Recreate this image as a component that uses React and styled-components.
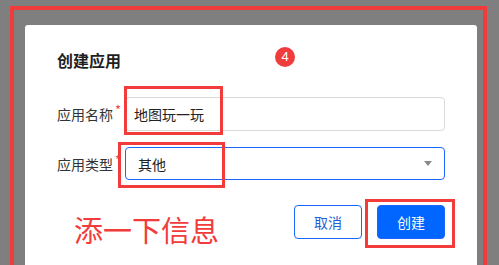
import styled, { createGlobalStyle } from "styled-components";

const GlobalStyle = createGlobalStyle`
	html, body {
		margin: 0;
		padding: 0;
		background: #7f7f7f;
		overflow: hidden;
	}
	body {
		font-family: "Noto Sans CJK SC", "Noto Sans", sans-serif;
	}
`;

const Frame = styled.div`
	box-sizing: border-box;
	width: 477px;
	height: 259px;
	margin: 6px 0 0 10px;
	border: 4px solid #f23b3b;
	border-bottom: none;
	padding: 15px 6px 0 11px;
	display: flex;
`;

const Dialog = styled.div`
	position: relative;
	flex: 1;
	background: #ffffff;
	border-radius: 3px 3px 0 0;
	padding: 23px 32px 0 32px;
	display: flex;
	flex-direction: column;
`;

const Title = styled.h3`
	margin: 0;
	font-size: 16px;
	line-height: 24px;
	font-weight: 700;
	color: #1f1f1f;
`;

const Form = styled.div`
	margin-top: 25px;
	display: flex;
	flex-direction: column;
	gap: 16px;
`;

const Row = styled.div`
	display: grid;
	grid-template-columns: 68px 1fr;
	align-items: center;
`;

const Label = styled.label`
	font-size: 14px;
	color: #333;
	white-space: nowrap;
	&::after {
		content: "*";
		color: #f04a4a;
		font-size: 13px;
		vertical-align: top;
		margin-left: 2px;
		position: relative;
		top: -4px;
	}
`;

const Field = styled.div`
	box-sizing: border-box;
	height: ${(p) => (p.$focus ? "33px" : "34px")};
	border: 1px solid ${(p) => (p.$focus ? "#1a66ff" : "#d9d9d9")};
	border-radius: 4px;
	padding: 0 10px 0 ${(p) => (p.$focus ? "12px" : "8px")};
	display: flex;
	align-items: center;
	justify-content: space-between;
	font-size: 14px;
	color: #222;
`;

const Caret = styled.span`
	width: 0;
	height: 0;
	border-left: 4px solid transparent;
	border-right: 4px solid transparent;
	border-top: 5px solid #8a8a8a;
	margin-right: 2px;
`;

const Footer = styled.div`
	margin-top: 25px;
	display: flex;
	justify-content: flex-end;
	gap: 15px;
`;

const Button = styled.button`
	box-sizing: border-box;
	width: 68px;
	height: 34px;
	border-radius: 4px;
	font-family: inherit;
	font-size: 14px;
	border: 1px solid #1a66ff;
	background: ${(p) => (p.$primary ? "#0066ff" : "#ffffff")};
	color: ${(p) => (p.$primary ? "#ffffff" : "#1f5fd8")};
	padding: 0;
`;

const Badge = styled.span`
	position: absolute;
	left: 250px;
	top: 22px;
	width: 20px;
	height: 20px;
	border-radius: 50%;
	background: #f03c3c;
	color: #fff;
	font-size: 13px;
	line-height: 20px;
	text-align: center;
	font-family: "Liberation Sans", sans-serif;
`;

const Mark = styled.div`
	position: absolute;
	box-sizing: border-box;
	border: 3px solid #f23b3b;
	left: ${(p) => p.$x}px;
	top: ${(p) => p.$y}px;
	width: ${(p) => p.$w}px;
	height: ${(p) => p.$h}px;
`;

const Note = styled.div`
	position: absolute;
	left: 49px;
	top: 186px;
	font-size: 29px;
	line-height: 36px;
	color: #f23b3b;
	white-space: nowrap;
`;

export default function App() {
	return (
		<>
			<GlobalStyle />
			<Frame>
				<Dialog>
					<Title>创建应用</Title>
					<Form>
						<Row>
							<Label>应用名称</Label>
							<Field>地图玩一玩</Field>
						</Row>
						<Row>
							<Label>应用类型</Label>
							<Field $focus>
								其他
								<Caret />
							</Field>
						</Row>
					</Form>
					<Footer>
						<Button>取消</Button>
						<Button $primary>创建</Button>
					</Footer>
					<Badge>4</Badge>
					<Mark $x={99} $y={61} $w={99} $h={49} />
					<Mark $x={93} $y={117} $w={107} $h={46} />
					<Mark $x={340} $y={174} $w={90} $h={49} />
					<Note>添一下信息</Note>
				</Dialog>
			</Frame>
		</>
	);
}
